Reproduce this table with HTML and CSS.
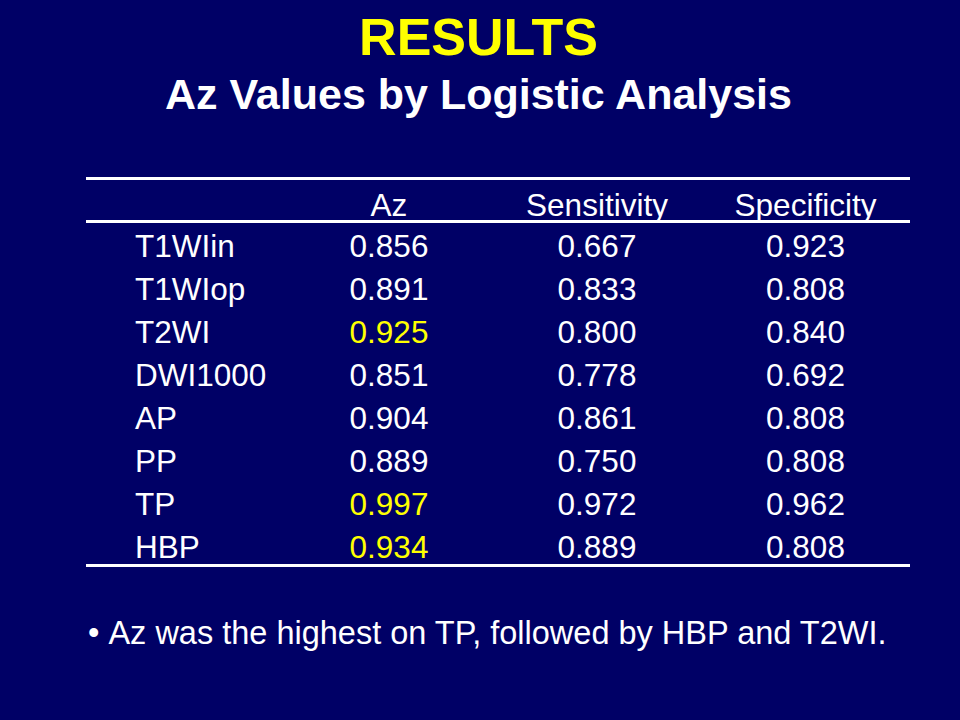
FILE: index.html
```html
<!DOCTYPE html>
<html lang="en">
<head>
    <meta charset="UTF-8">
    <title>Results - Az Values by Logistic Analysis</title>
    <link rel="stylesheet" href="styles.css">
</head>
<body>
<header class="titles">
    <h1>RESULTS</h1>
    <h2>Az Values by Logistic Analysis</h2>
</header>
<div class="results">
    <div class="row head">
        <span></span>
        <span class="num">Az</span>
        <span class="num">Sensitivity</span>
        <span class="num">Specificity</span>
    </div>
    <div class="rows">
        <div class="row"><span>T1WIin</span><span class="num">0.856</span><span class="num">0.667</span><span class="num">0.923</span></div>
        <div class="row"><span>T1WIop</span><span class="num">0.891</span><span class="num">0.833</span><span class="num">0.808</span></div>
        <div class="row"><span>T2WI</span><span class="num best">0.925</span><span class="num">0.800</span><span class="num">0.840</span></div>
        <div class="row"><span>DWI1000</span><span class="num">0.851</span><span class="num">0.778</span><span class="num">0.692</span></div>
        <div class="row"><span>AP</span><span class="num">0.904</span><span class="num">0.861</span><span class="num">0.808</span></div>
        <div class="row"><span>PP</span><span class="num">0.889</span><span class="num">0.750</span><span class="num">0.808</span></div>
        <div class="row"><span>TP</span><span class="num best">0.997</span><span class="num">0.972</span><span class="num">0.962</span></div>
        <div class="row"><span>HBP</span><span class="num best">0.934</span><span class="num">0.889</span><span class="num">0.808</span></div>
    </div>
</div>
<ul class="notes">
    <li>Az was the highest on TP, followed by HBP and T2WI.</li>
</ul>
</body>
</html>
```

FILE: styles.css
```css
html, body {
    margin: 0;
    height: 100%;
}

body {
    background: #000066;
    color: #ffffff;
    font-family: "Liberation Sans", Arial, sans-serif;
    overflow: hidden;
}

.titles {
    text-align: center;
    padding-top: 11px;
    padding-right: 3px;
}

h1 {
    margin: 0;
    font-size: 52px;
    line-height: 52px;
    font-weight: 700;
    color: #ffff00;
}

h2 {
    margin: 10px 0 0;
    font-size: 43px;
    line-height: 43px;
    font-weight: 700;
}

.results {
    width: 824px;
    margin: 61px 0 0 86px;
    border-top: 3px solid #ffffff;
    border-bottom: 3px solid #ffffff;
    font-size: 31.5px;
}

.row {
    display: grid;
    grid-template-columns: 199px 208px 208px 209px;
    height: 43px;
    line-height: 43px;
}

.row span:first-child {
    padding-left: 49px;
}

.row .num {
    text-align: center;
}

.row.head {
    line-height: 30px;
    padding-top: 10px;
    box-sizing: border-box;
    border-bottom: 3px solid #ffffff;
    height: 43px;
}

.rows {
    padding-top: 2px;
}

.rows .row:last-child {
    height: 38px;
}

.best {
    color: #ffff00;
}

.notes {
    list-style: none;
    margin: 50px 0 0;
    padding: 0 0 0 88px;
    font-size: 32.5px;
    line-height: 32px;
}

.notes li::before {
    content: "\2022\00a0";
}
```
